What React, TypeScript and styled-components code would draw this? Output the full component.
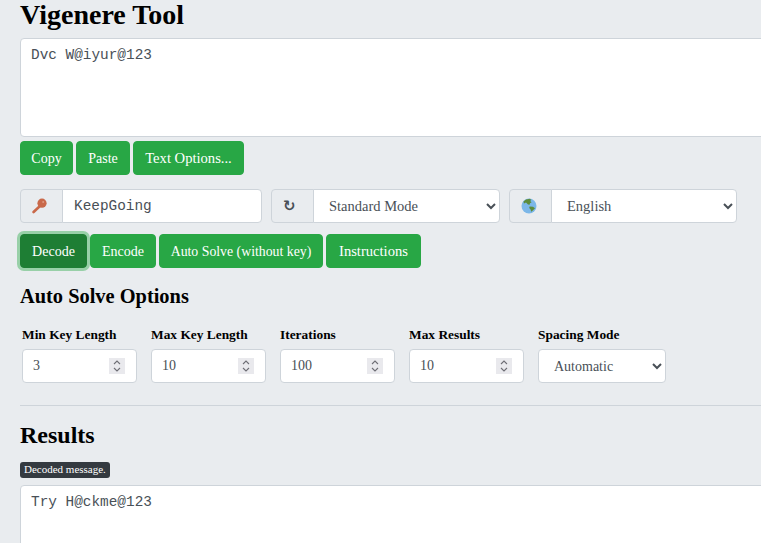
import React from 'react'
import styled, { createGlobalStyle } from 'styled-components'

const spinnerIcon = encodeURIComponent(
  '<svg xmlns="http://www.w3.org/2000/svg" width="16" height="16" viewBox="0 0 16 16">' +
    '<path d="M5 6l3-3 3 3M5 10l3 3 3-3" fill="none" stroke="#6f6f76" stroke-width="1.1"/></svg>',
)

const GlobalStyle = createGlobalStyle`
  html, body {
    margin: 0;
    height: 100%;
    overflow: hidden;
    background: #e9ecef;
  }
  body {
    font-family: "Liberation Serif", serif;
    color: #000;
  }
`

const Page = styled.div`
  width: 1000px;
  padding: 0 0 0 20px;
  box-sizing: border-box;
`

const Title = styled.h1`
  margin: 0;
  height: 38px;
  font-size: 28px;
  line-height: 30px;
  font-weight: 700;
`

const TextBox = styled.textarea`
  display: block;
  box-sizing: border-box;
  width: 960px;
  height: 99px;
  padding: 6px 10px;
  border: 1px solid #ced4da;
  border-radius: 4px;
  background: #fff;
  color: #495057;
  font-family: "Liberation Mono", monospace;
  font-size: 14.4px;
  line-height: 21.6px;
  resize: none;
  outline: none;
`

const ButtonRow = styled.div<{ $top: number }>`
  display: flex;
  gap: 3px;
  margin-top: ${p => p.$top}px;
`

const Button = styled.button<{ $active?: boolean; $width: number; $size?: number }>`
  box-sizing: border-box;
  width: ${p => p.$width}px;
  height: 34px;
  padding: 1px 0 0;
  border: 1px solid ${p => (p.$active ? '#1e7e34' : '#28a745')};
  border-radius: 4px;
  background: ${p => (p.$active ? '#1e7e34' : '#28a745')};
  color: #fff;
  font-family: inherit;
  font-size: ${p => p.$size ?? 14}px;
  box-shadow: ${p => (p.$active ? '0 0 0 3px rgba(72, 180, 97, 0.5)' : 'none')};
`

const ControlRow = styled.div`
  display: flex;
  margin-top: 14px;
`

const InputGroup = styled.div<{ $width: number; $gap: number }>`
  display: flex;
  box-sizing: border-box;
  width: ${p => p.$width}px;
  height: 34px;
  margin-right: ${p => p.$gap}px;
`

const Prepend = styled.div`
  display: flex;
  align-items: center;
  box-sizing: border-box;
  flex: none;
  width: 43px;
  padding-left: 11px;
  border: 1px solid #ced4da;
  border-radius: 4px 0 0 4px;
  background: #e9ecef;
  color: #495057;
  font-family: "DejaVu Sans", sans-serif;
  font-size: 15px;
  font-weight: 700;
`

const KeyInput = styled.input`
  box-sizing: border-box;
  flex: 1;
  min-width: 0;
  margin-left: -1px;
  padding: 0 11px;
  border: 1px solid #ced4da;
  border-radius: 0 4px 4px 0;
  background: #fff;
  color: #495057;
  font-family: "Liberation Mono", monospace;
  font-size: 14.4px;
  outline: none;
`

const GroupSelect = styled.select`
  box-sizing: border-box;
  flex: 1;
  min-width: 0;
  margin-left: -1px;
  padding: 0 8px 0 11px;
  border: 1px solid #ced4da;
  border-radius: 0 4px 4px 0;
  background-color: #fff;
  color: #495057;
  font-family: inherit;
  font-size: 14.5px;
  outline: none;
`

const SectionTitle = styled.h2<{ $size: number; $top: number; $height: number }>`
  margin: ${p => p.$top}px 0 0;
  height: ${p => p.$height}px;
  font-size: ${p => p.$size}px;
  line-height: ${p => p.$height}px;
  font-weight: 700;
`

const OptionsRow = styled.div`
  display: flex;
  gap: 14px;
  margin: 17px 0 0 2px;
`

const Field = styled.label<{ $width: number }>`
  display: flex;
  flex-direction: column;
  gap: 6px;
  width: ${p => p.$width}px;
  font-size: 13.4px;
  font-weight: 700;
  line-height: 17px;
  white-space: nowrap;
`

const NumberInput = styled.input`
  box-sizing: border-box;
  width: 100%;
  height: 34px;
  padding: 0 11px 0 10px;
  border: 1px solid #ced4da;
  border-radius: 4px;
  background: #fff;
  color: #495057;
  font-family: inherit;
  font-size: 14px;
  font-weight: 400;
  outline: none;

  &::-webkit-inner-spin-button {
    -webkit-appearance: none;
    appearance: none;
    width: 16px;
    height: 16px;
    opacity: 1;
    background: #e9e9ed url("data:image/svg+xml,${spinnerIcon}") center no-repeat;
  }
`

const FieldSelect = styled.select`
  box-sizing: border-box;
  width: 100%;
  height: 34px;
  padding: 0 8px 0 11px;
  border: 1px solid #ced4da;
  border-radius: 4px;
  background-color: #fff;
  color: #495057;
  font-family: inherit;
  font-size: 14px;
  font-weight: 400;
  outline: none;
`

const Divider = styled.hr`
  height: 1px;
  margin: 22px 0 0;
  border: 0;
  background: #ced4da;
`

const BadgeRow = styled.div`
  height: 35px;
`

const Badge = styled.div`
  display: inline-block;
  height: 16px;
  margin-top: 12px;
  padding: 0 4px;
  border-radius: 3px;
  background: #343a40;
  color: #fff;
  font-size: 11px;
  line-height: 15px;
  vertical-align: top;
`

const KeyIcon = () => (
  <svg width="15" height="16" viewBox="0 0 15 16" aria-hidden="true">
    <circle cx="10" cy="5.2" r="4.6" fill="#c9694a" />
    <path d="M8 8 1.6 14" stroke="#c9694a" strokeWidth="2.6" strokeLinecap="round" />
    <circle cx="11.2" cy="4" r="1" fill="#e09a80" />
  </svg>
)

const GlobeIcon = () => (
  <svg width="16" height="16" viewBox="0 0 16 16" aria-hidden="true">
    <circle cx="8" cy="8" r="7.5" fill="#7cb7e8" />
    <path
      d="M2.5 3.6 5 1.4l4-.6 1.2 1.2-1 1 1.4 1.2-1.6 1.1-.4 1.5-1.6-.4L5 4.6 3 5.4z"
      fill="#5d8c3a"
    />
    <path d="M8.6 8.4l3.4.4 2 1.4-2.2 2.2-1.6 1.4-.6-2.4-1.4-1.4z" fill="#5d8c3a" />
  </svg>
)

export default function App() {
  return (
    <Page>
      <GlobalStyle />
      <Title>Vigenere Tool</Title>
      <TextBox defaultValue="Dvc W@iyur@123" spellCheck={false} />
      <ButtonRow $top={4}>
        <Button $width={53}>Copy</Button>
        <Button $width={54}>Paste</Button>
        <Button $width={111} $size={14.6}>
          Text Options...
        </Button>
      </ButtonRow>
      <ControlRow>
        <InputGroup $width={242} $gap={9}>
          <Prepend>
            <KeyIcon />
          </Prepend>
          <KeyInput defaultValue="KeepGoing" spellCheck={false} />
        </InputGroup>
        <InputGroup $width={229} $gap={9}>
          <Prepend>↻</Prepend>
          <GroupSelect defaultValue="standard">
            <option value="standard">Standard Mode</option>
          </GroupSelect>
        </InputGroup>
        <InputGroup $width={228} $gap={0}>
          <Prepend>
            <GlobeIcon />
          </Prepend>
          <GroupSelect defaultValue="en">
            <option value="en">English</option>
          </GroupSelect>
        </InputGroup>
      </ControlRow>
      <ButtonRow $top={11}>
        <Button $width={67} $active>
          Decode
        </Button>
        <Button $width={66}>Encode</Button>
        <Button $width={164} $size={13.8}>
          Auto Solve (without key)
        </Button>
        <Button $width={95} $size={14.6}>
          Instructions
        </Button>
      </ButtonRow>
      <SectionTitle $size={20.4} $top={15} $height={26}>
        Auto Solve Options
      </SectionTitle>
      <OptionsRow>
        <Field $width={115}>
          Min Key Length
          <NumberInput type="number" defaultValue={3} />
        </Field>
        <Field $width={115}>
          Max Key Length
          <NumberInput type="number" defaultValue={10} />
        </Field>
        <Field $width={115}>
          Iterations
          <NumberInput type="number" defaultValue={100} />
        </Field>
        <Field $width={115}>
          Max Results
          <NumberInput type="number" defaultValue={10} />
        </Field>
        <Field $width={128}>
          Spacing Mode
          <FieldSelect defaultValue="auto">
            <option value="auto">Automatic</option>
          </FieldSelect>
        </Field>
      </OptionsRow>
      <Divider />
      <SectionTitle $size={24} $top={14} $height={30}>
        Results
      </SectionTitle>
      <BadgeRow>
        <Badge>Decoded message.</Badge>
      </BadgeRow>
      <TextBox defaultValue="Try H@ckme@123" spellCheck={false} />
    </Page>
  )
}
